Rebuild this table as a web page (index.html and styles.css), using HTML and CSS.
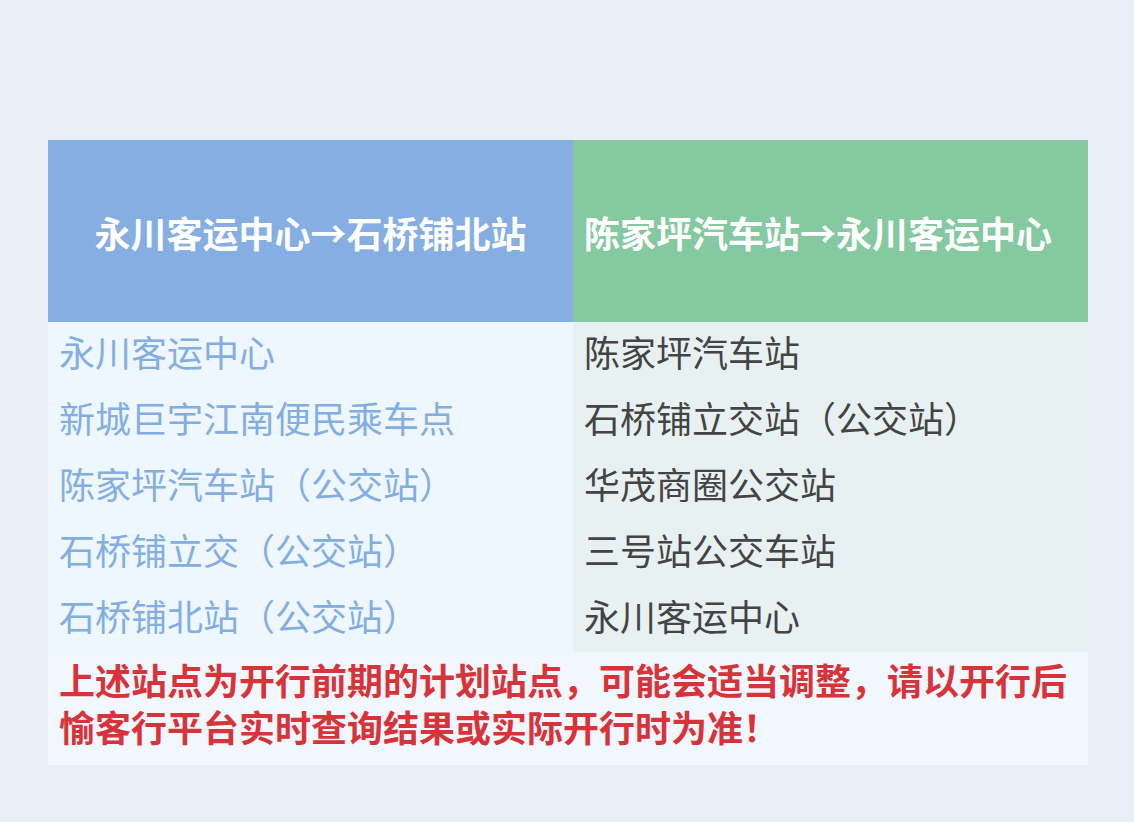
FILE: index.html
```html
<!DOCTYPE html>
<html lang="zh-CN">
<head>
<meta charset="utf-8">
<title>线路站点</title>
<link rel="stylesheet" href="styles.css">
</head>
<body>
<div class="page">
  <div class="table">
    <div class="head head-blue">永川客运中心→石桥铺北站</div>
    <div class="head head-green">陈家坪汽车站→永川客运中心</div>
    <div class="col col-left">
      <div class="cell">永川客运中心</div>
      <div class="cell">新城巨宇江南便民乘车点</div>
      <div class="cell">陈家坪汽车站（公交站）</div>
      <div class="cell">石桥铺立交（公交站）</div>
      <div class="cell">石桥铺北站（公交站）</div>
    </div>
    <div class="col col-right">
      <div class="cell">陈家坪汽车站</div>
      <div class="cell">石桥铺立交站（公交站）</div>
      <div class="cell">华茂商圈公交站</div>
      <div class="cell">三号站公交车站</div>
      <div class="cell">永川客运中心</div>
    </div>
    <div class="note">上述站点为开行前期的计划站点，可能会适当调整，请以开行后愉客行平台实时查询结果或实际开行时为准！</div>
  </div>
</div>
</body>
</html>
```

FILE: styles.css
```css
html, body {
  margin: 0;
  padding: 0;
}
body {
  background: #eaeff7;
  font-family: "Noto Sans CJK SC", "Noto Sans", sans-serif;
  width: 1134px;
  height: 822px;
  overflow: hidden;
}
.page {
  padding: 140px 46px 0 48px;
}
.table {
  display: grid;
  grid-template-columns: 525px 515px;
  background: #f0f7fe;
}
.head {
  height: 182px;
  display: flex;
  align-items: center;
  color: #ffffff;
  font-size: 36px;
  font-weight: 700;
  line-height: 1;
  padding-top: 2px;
  box-sizing: border-box;
}
.head-blue {
  background: #85aee2;
  justify-content: center;
}
.head-green {
  background: #85c9a0;
  padding-left: 11px;
}
.col {
  display: flex;
  flex-direction: column;
}
.col-left {
  background: #eff7fe;
  color: #82aee2;
}
.col-right {
  background: #e8f1f1;
  color: #444444;
}
.cell {
  height: 66px;
  display: flex;
  align-items: center;
  padding-left: 11px;
  font-size: 36px;
  line-height: 1;
  padding-bottom: 8px;
  box-sizing: border-box;
}
.note {
  grid-column: 1 / 3;
  color: #d9333a;
  font-size: 36px;
  font-weight: 700;
  line-height: 47px;
  padding: 4px 20px 15px 11px;
  background: #f0f7fe;
}
```
